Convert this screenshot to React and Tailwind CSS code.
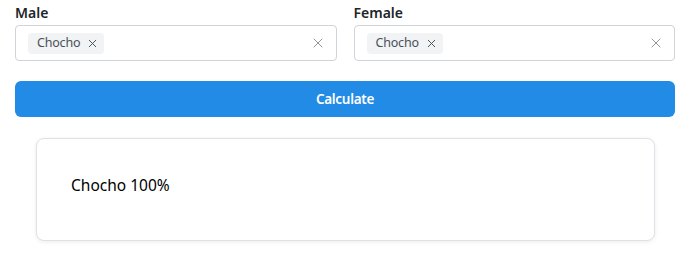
import { X } from "lucide-react";

const font = { fontFamily: '"Noto Sans", "Segoe UI", sans-serif' };

function Field({ label, value }) {
  return (
    <div className="flex flex-col">
      <label className="text-[14px] leading-[20px] font-semibold text-[#212529] mb-[2px]">
        {label}
      </label>
      <div className="h-[36px] flex items-center pl-[12px] pr-[10px] border border-[#ced4da] rounded-[4px] bg-white">
        <div className="flex-1 flex items-center">
          <span className="flex items-center h-[21px] pl-[9px] pr-[5px] rounded-[4px] bg-[#f1f3f5] text-[12.5px] tracking-[-0.2px] text-[#495057]">
            {value}
            <X size={13} strokeWidth={1.8} className="ml-[6px] text-[#495057]" />
          </span>
        </div>
        <X size={16} strokeWidth={1.4} className="text-[#868e96]" />
      </div>
    </div>
  );
}

export default function App() {
  return (
    <div className="bg-white min-h-[264px] pl-[15px] pr-[23px] pt-[3px]" style={font}>
      <div className="grid grid-cols-2 gap-[17px]">
        <Field label="Male" value="Chocho" />
        <Field label="Female" value="Chocho" />
      </div>
      <button className="mt-[20px] w-full h-[36px] rounded-[6px] bg-[#228be6] text-white text-[13.5px] tracking-[-0.3px] font-semibold">
        Calculate
      </button>
      <div className="mt-[21px] ml-[21px] mr-[20px] h-[103px] flex items-center px-[34px] pb-[8px] rounded-[8px] border border-[#dee2e6] bg-white shadow-[0_1px_4px_rgba(0,0,0,0.08)]">
        <p className="text-[15.5px] text-[#000]">Chocho 100%</p>
      </div>
    </div>
  );
}
